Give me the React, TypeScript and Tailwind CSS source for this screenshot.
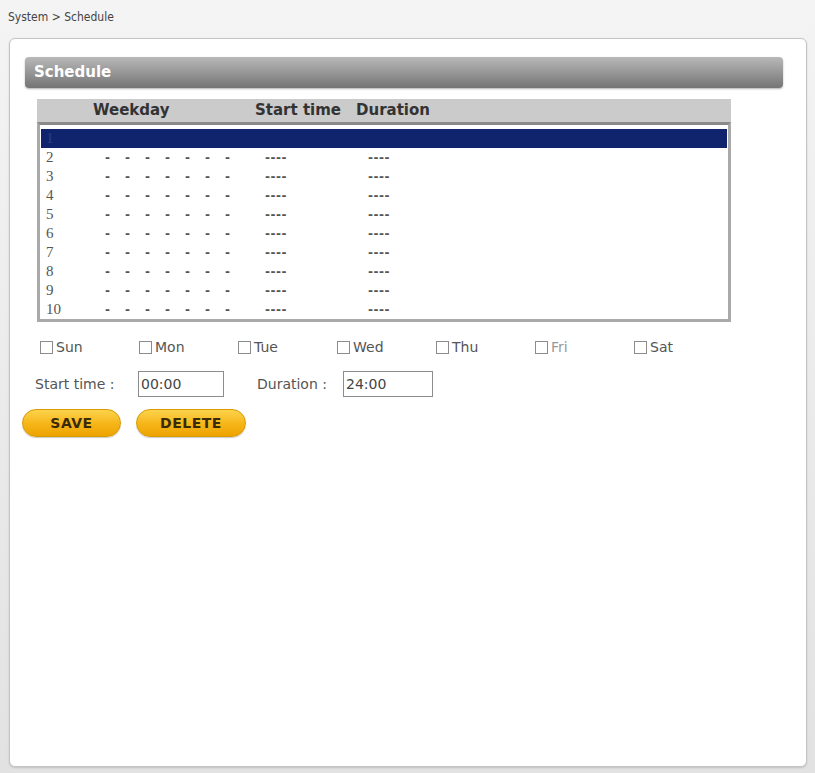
import { useState } from 'react';

const days = ['Sun', 'Mon', 'Tue', 'Wed', 'Thu', 'Fri', 'Sat'];
const rows = Array.from({ length: 10 }, (_, i) => i + 1);

const sans = { fontFamily: '"DejaVu Sans", Verdana, sans-serif' };

function ScheduleRow({ n, selected }: { n: number; selected: boolean }) {
  return (
    <div
      className={`grid grid-cols-[64px_160px_103px_1fr] items-center h-[19px] ${
        selected ? 'bg-[#0f246c] text-[#2b3f8a]' : 'text-[#555]'
      }`}
    >
      <span className="pl-[5px] text-[15px] leading-none" style={{ fontFamily: '"Liberation Serif", serif' }}>
        {n}
      </span>
      {selected ? (
        <span />
      ) : (
        <span className="flex text-[12px] font-bold leading-none" style={sans}>
          {Array.from({ length: 7 }, (_, i) => (
            <span key={i} className="w-[20px]">-</span>
          ))}
        </span>
      )}
      {selected ? <span /> : <span className="text-[12px] font-bold leading-none tracking-[0.5px]" style={sans}>----</span>}
      {selected ? <span /> : <span className="text-[12px] font-bold leading-none tracking-[0.5px]" style={sans}>----</span>}
    </div>
  );
}

export default function App() {
  const [checked, setChecked] = useState<Record<string, boolean>>({});
  const [start, setStart] = useState('00:00');
  const [duration, setDuration] = useState('24:00');

  return (
    <div className="w-[815px] h-[773px] bg-gradient-to-b from-[#f4f4f4] to-[#e2e2e2] flex flex-col" style={sans}>
      <div
        className="h-[38px] pl-[8px] pt-[8px] text-[12px] text-[#444]"
        style={{ fontFamily: '"DejaVu Sans Condensed", "Liberation Sans Narrow", sans-serif' }}
      >
        System &gt; Schedule
      </div>

      <div className="ml-[9px] mr-[8px] h-[729px] bg-white border border-[#c4c4c4] rounded-[6px] shadow-[0_1px_2px_rgba(0,0,0,0.15)] flex flex-col">
        {/* section title bar */}
        <div className="mt-[18px] ml-[15px] mr-[23px] h-[31px] rounded-[4px] bg-gradient-to-b from-[#b9b9b9] to-[#757575] shadow-[0_1px_2px_rgba(0,0,0,0.3)] flex items-center pl-[9px]">
          <span className="text-white font-bold text-[15px]">Schedule</span>
        </div>

        {/* schedule list */}
        <div className="mt-[11px] ml-[27px] w-[694px]">
          <div className="h-[23px] bg-[#cbcbcb] grid grid-cols-[56px_162px_101px_1fr] items-center text-[15px] font-bold text-[#333]">
            <span />
            <span>Weekday</span>
            <span>Start time</span>
            <span>Duration</span>
          </div>
          <div className="border-[3px] border-[#a9a9a9] border-t-[#8a8a8a] bg-white pt-[4px] pl-[1px] pr-[1px]">
            {rows.map((n) => (
              <ScheduleRow key={n} n={n} selected={n === 1} />
            ))}
          </div>
        </div>

        {/* weekday checkboxes */}
        <div className="mt-[15px] ml-[30px] flex text-[14px] text-[#555]">
          {days.map((d) => (
            <label key={d} className="w-[99px] flex items-center cursor-pointer">
              <span
                onClick={() => setChecked({ ...checked, [d]: !checked[d] })}
                className="w-[13px] h-[13px] border border-[#8c8c8c] bg-white mr-[3px] flex items-center justify-center text-[10px] leading-none"
              >
                {checked[d] ? '✓' : ''}
              </span>
              <span className={d === 'Fri' ? 'text-[#999]' : ''}>{d}</span>
            </label>
          ))}
        </div>

        {/* time fields */}
        <div className="mt-[13px] ml-[25px] flex items-center text-[14px] text-[#555]">
          <span className="w-[103px]">Start time :</span>
          <input
            value={start}
            onChange={(e) => setStart(e.target.value)}
            className="w-[86px] h-[26px] border border-[#8c8c8c] px-[2px] text-[14px] text-[#444] outline-none"
          />
          <span className="ml-[33px] w-[86px]">Duration :</span>
          <input
            value={duration}
            onChange={(e) => setDuration(e.target.value)}
            className="w-[90px] h-[26px] border border-[#8c8c8c] px-[2px] text-[14px] text-[#444] outline-none"
          />
        </div>

        {/* actions */}
        <div className="mt-[12px] ml-[12px] flex gap-[15px]">
          <button className="w-[99px] h-[28px] rounded-full border border-[#d99a00] bg-gradient-to-b from-[#fcd34a] via-[#f7b719] to-[#eda300] shadow-[0_1px_1px_rgba(0,0,0,0.2)] text-[14px] font-bold text-[#3b2a05] tracking-[0.5px]">
            SAVE
          </button>
          <button className="w-[110px] h-[28px] rounded-full border border-[#d99a00] bg-gradient-to-b from-[#fcd34a] via-[#f7b719] to-[#eda300] shadow-[0_1px_1px_rgba(0,0,0,0.2)] text-[14px] font-bold text-[#3b2a05] tracking-[0.5px]">
            DELETE
          </button>
        </div>
      </div>
    </div>
  );
}
